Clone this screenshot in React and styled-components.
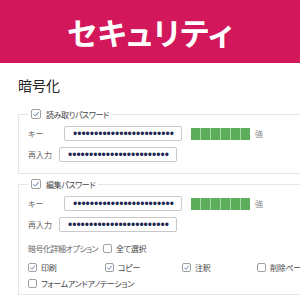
import React from 'react';
import styled, { createGlobalStyle } from 'styled-components';

const GlobalStyle = createGlobalStyle`
  html, body { margin: 0; padding: 0; background: #fff; overflow: hidden; }
  body {
    width: 300px; height: 300px;
    font-family: "Noto Sans CJK JP", "Noto Sans", sans-serif;
  }
`;

const Header = styled.header`
  height: 63px;
  background: #d3175b;
  display: flex;
  align-items: center;
  justify-content: center;
  color: #fff;
  font-size: 31px;
  font-weight: 700;
  font-feature-settings: "palt";
  letter-spacing: 0.5px;
`;

const Main = styled.main`
  padding: 0 0 0 18px;
`;

const Title = styled.h2`
  margin: 14px 0 0;
  font-size: 14px;
  line-height: 16px;
  font-weight: 400;
  color: #222;
`;

const Fieldset = styled.fieldset`
  margin: ${p => p.$mt}px 0 0;
  width: 340px;
  min-width: 0;
  box-sizing: border-box;
  border: 1px solid #e6e6e6;
  padding: 6px 0 ${p => p.$pb}px 9px;
  font-feature-settings: "palt";
`;

const Legend = styled.legend`
  display: flex;
  align-items: center;
  gap: 5px;
  height: 12px;
  padding: 0 3px;
  font-size: 8px;
  letter-spacing: -0.4px;
  color: #444;
`;

const Row = styled.div`
  display: flex;
  align-items: center;
  height: ${p => p.$h || 15}px;
  margin-top: ${p => p.$mt || 0}px;
`;

const FieldLabel = styled.span`
  width: ${p => p.$w}px;
  flex-shrink: 0;
  font-size: 8px;
  color: #666;
  white-space: nowrap;
`;

const PasswordInput = styled.input`
  width: 118px;
  height: 15px;
  box-sizing: border-box;
  border: 1px solid #c9c9c9;
  border-radius: 2px;
  padding: 0 0 0 8px;
  margin: 0;
  font-family: "Liberation Sans", Arial, sans-serif;
  font-size: 12px;
  color: #1c2752;
  background: #fff;
  outline: none;
`;

const Strength = styled.div`
  display: flex;
  gap: 1px;
  margin-left: 9px;
  background: #a8d6a6;
  height: 12px;
`;

const Block = styled.span`
  width: 9px;
  height: 12px;
  background: #5cae5a;
`;

const StrengthText = styled.span`
  margin-left: 5px;
  font-size: 8px;
  color: #888;
`;

const Box = styled.span`
  width: ${p => p.$size}px;
  height: ${p => p.$size}px;
  box-sizing: border-box;
  border: 1px solid #a0a0a0;
  border-radius: 2px;
  background: #fff;
  display: inline-flex;
  align-items: center;
  justify-content: center;
  flex-shrink: 0;
`;

const OptionGrid = styled.div`
  display: grid;
  grid-template-columns: 77px 77px 75px 76px;
  grid-auto-rows: 14px;
  row-gap: 2px;
  margin-top: 4px;
`;

const Item = styled.label`
  display: flex;
  align-items: center;
  gap: 4px;
  font-size: 8px;
  letter-spacing: -0.3px;
  color: #444;
  white-space: nowrap;
  grid-column: ${p => (p.$span ? '1 / span 3' : 'auto')};
`;

const OptionLabel = styled.span`
  width: 75px;
  flex-shrink: 0;
  font-size: 8px;
  letter-spacing: -0.5px;
  color: #666;
  white-space: nowrap;
`;

function CheckBox({ checked, size = 9 }) {
  return (
    <Box $size={size}>
      {checked && (
        <svg width={size - 2} height={size - 2} viewBox="0 0 10 10">
          <path d="M1.8 5.2 L4.2 7.6 L8.4 2.4" fill="none" stroke="#5673a3" strokeWidth="1.2" />
        </svg>
      )}
    </Box>
  );
}

function PasswordRows() {
  return (
    <>
      <Row>
        <FieldLabel $w={36}>キー</FieldLabel>
        <PasswordInput type="password" readOnly value="passwordpassword12345678" />
        <Strength>
          {[0, 1, 2, 3, 4, 5].map(i => <Block key={i} />)}
        </Strength>
        <StrengthText>強</StrengthText>
      </Row>
      <Row $mt={6}>
        <FieldLabel $w={31}>再入力</FieldLabel>
        <PasswordInput type="password" readOnly value="passwordpassword12345678" />
      </Row>
    </>
  );
}

export default function App() {
  return (
    <>
      <GlobalStyle />
      <Header>セキュリティ</Header>
      <Main>
        <Title>暗号化</Title>
        <Fieldset $mt={15} $pb={11}>
          <Legend>
            <CheckBox checked size={10} />
            読み取りパスワード
          </Legend>
          <PasswordRows />
        </Fieldset>
        <Fieldset $mt={4} $pb={4}>
          <Legend>
            <CheckBox checked size={10} />
            編集パスワード
          </Legend>
          <PasswordRows />
          <Row $mt={9}>
            <OptionLabel>暗号化詳細オプション</OptionLabel>
            <Item>
              <CheckBox />
              全て選択
            </Item>
          </Row>
          <OptionGrid>
            <Item><CheckBox checked />印刷</Item>
            <Item><CheckBox checked />コピー</Item>
            <Item><CheckBox checked />注釈</Item>
            <Item><CheckBox />削除ページ</Item>
            <Item $span><CheckBox />フォームアンドアノテーション</Item>
          </OptionGrid>
        </Fieldset>
      </Main>
    </>
  );
}
